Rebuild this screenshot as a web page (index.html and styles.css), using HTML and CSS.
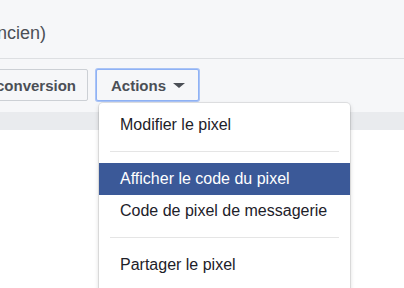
FILE: index.html
```html
<!DOCTYPE html>
<html lang="fr">
<head>
<meta charset="utf-8">
<link rel="stylesheet" href="styles.css">
</head>
<body>
<div class="page">
  <div class="header">
    <div class="title-wrap"><span class="title">Pixel Facebook (ancien)</span></div>
  </div>
  <div class="toolbar">
    <button class="btn btn-conv">Créer une conversion</button>
    <button class="btn btn-actions">Actions <span class="caret"></span></button>
  </div>
  <div class="strip"></div>
  <div class="content"></div>
  <div class="menu">
    <div class="item">Modifier le pixel</div>
    <div class="sep"></div>
    <div class="item active">Afficher le code du pixel</div>
    <div class="item">Code de pixel de messagerie</div>
    <div class="sep"></div>
    <div class="item">Partager le pixel</div>
  </div>
</div>
</body>
</html>
```

FILE: styles.css
```css
html, body {
  margin: 0;
  padding: 0;
  background: #f6f7f9;
  font-family: "Liberation Sans", Arial, sans-serif;
  overflow: hidden;
}
.page {
  position: relative;
  width: 404px;
  height: 288px;
  overflow: hidden;
}
.header {
  height: 58px;
  border-bottom: 1px solid #dddfe2;
  display: flex;
  align-items: center;
}
.title-wrap {
  width: 46px;
  display: flex;
  justify-content: flex-end;
  padding-top: 9px;
}
.title {
  font-size: 18px;
  color: #4b4f56;
  white-space: nowrap;
  flex-shrink: 0;
}
.toolbar {
  height: 53px;
  display: flex;
  align-items: flex-start;
  gap: 8px;
  padding-top: 10px;
  box-sizing: border-box;
}
.btn {
  height: 32px;
  box-sizing: border-box;
  border: 1px solid #ccd0d5;
  border-radius: 2px;
  background: #f6f7f9;
  color: #4b4f56;
  font-family: "Liberation Sans", Arial, sans-serif;
  font-weight: bold;
  font-size: 15px;
  padding: 0 11px;
  display: flex;
  align-items: center;
  gap: 6px;
  white-space: nowrap;
}
.btn-conv {
  margin-left: -110px;
  width: 198px;
  justify-content: flex-end;
}
.btn-actions {
  width: 103px;
  border: 1px solid #8fb2f5;
  box-shadow: 0 0 0 1px #aac4f6;
  padding-left: 14px;
}
.caret {
  width: 0;
  height: 0;
  border-left: 6px solid transparent;
  border-right: 6px solid transparent;
  border-top: 5px solid #4b4f56;
  margin-top: 1px;
  margin-left: 1px;
}
.strip {
  height: 18px;
  background: #e9ebee;
}
.content {
  height: 200px;
  background: #ffffff;
}
.menu {
  position: absolute;
  left: 99px;
  top: 103px;
  width: 251px;
  height: 200px;
  background: #ffffff;
  border-radius: 4px;
  box-shadow: 0 0 0 1px rgba(0,0,0,0.08), 0 2px 5px rgba(0,0,0,0.18);
  padding-top: 6px;
  box-sizing: border-box;
}
.item {
  height: 32px;
  line-height: 32px;
  padding-left: 21px;
  font-size: 16px;
  color: #1d2129;
  white-space: nowrap;
}
.item.active {
  background: #3b5998;
  color: #ffffff;
}
.sep {
  height: 1px;
  background: #e5e5e5;
  margin: 10px 11px 11px;
}
```
